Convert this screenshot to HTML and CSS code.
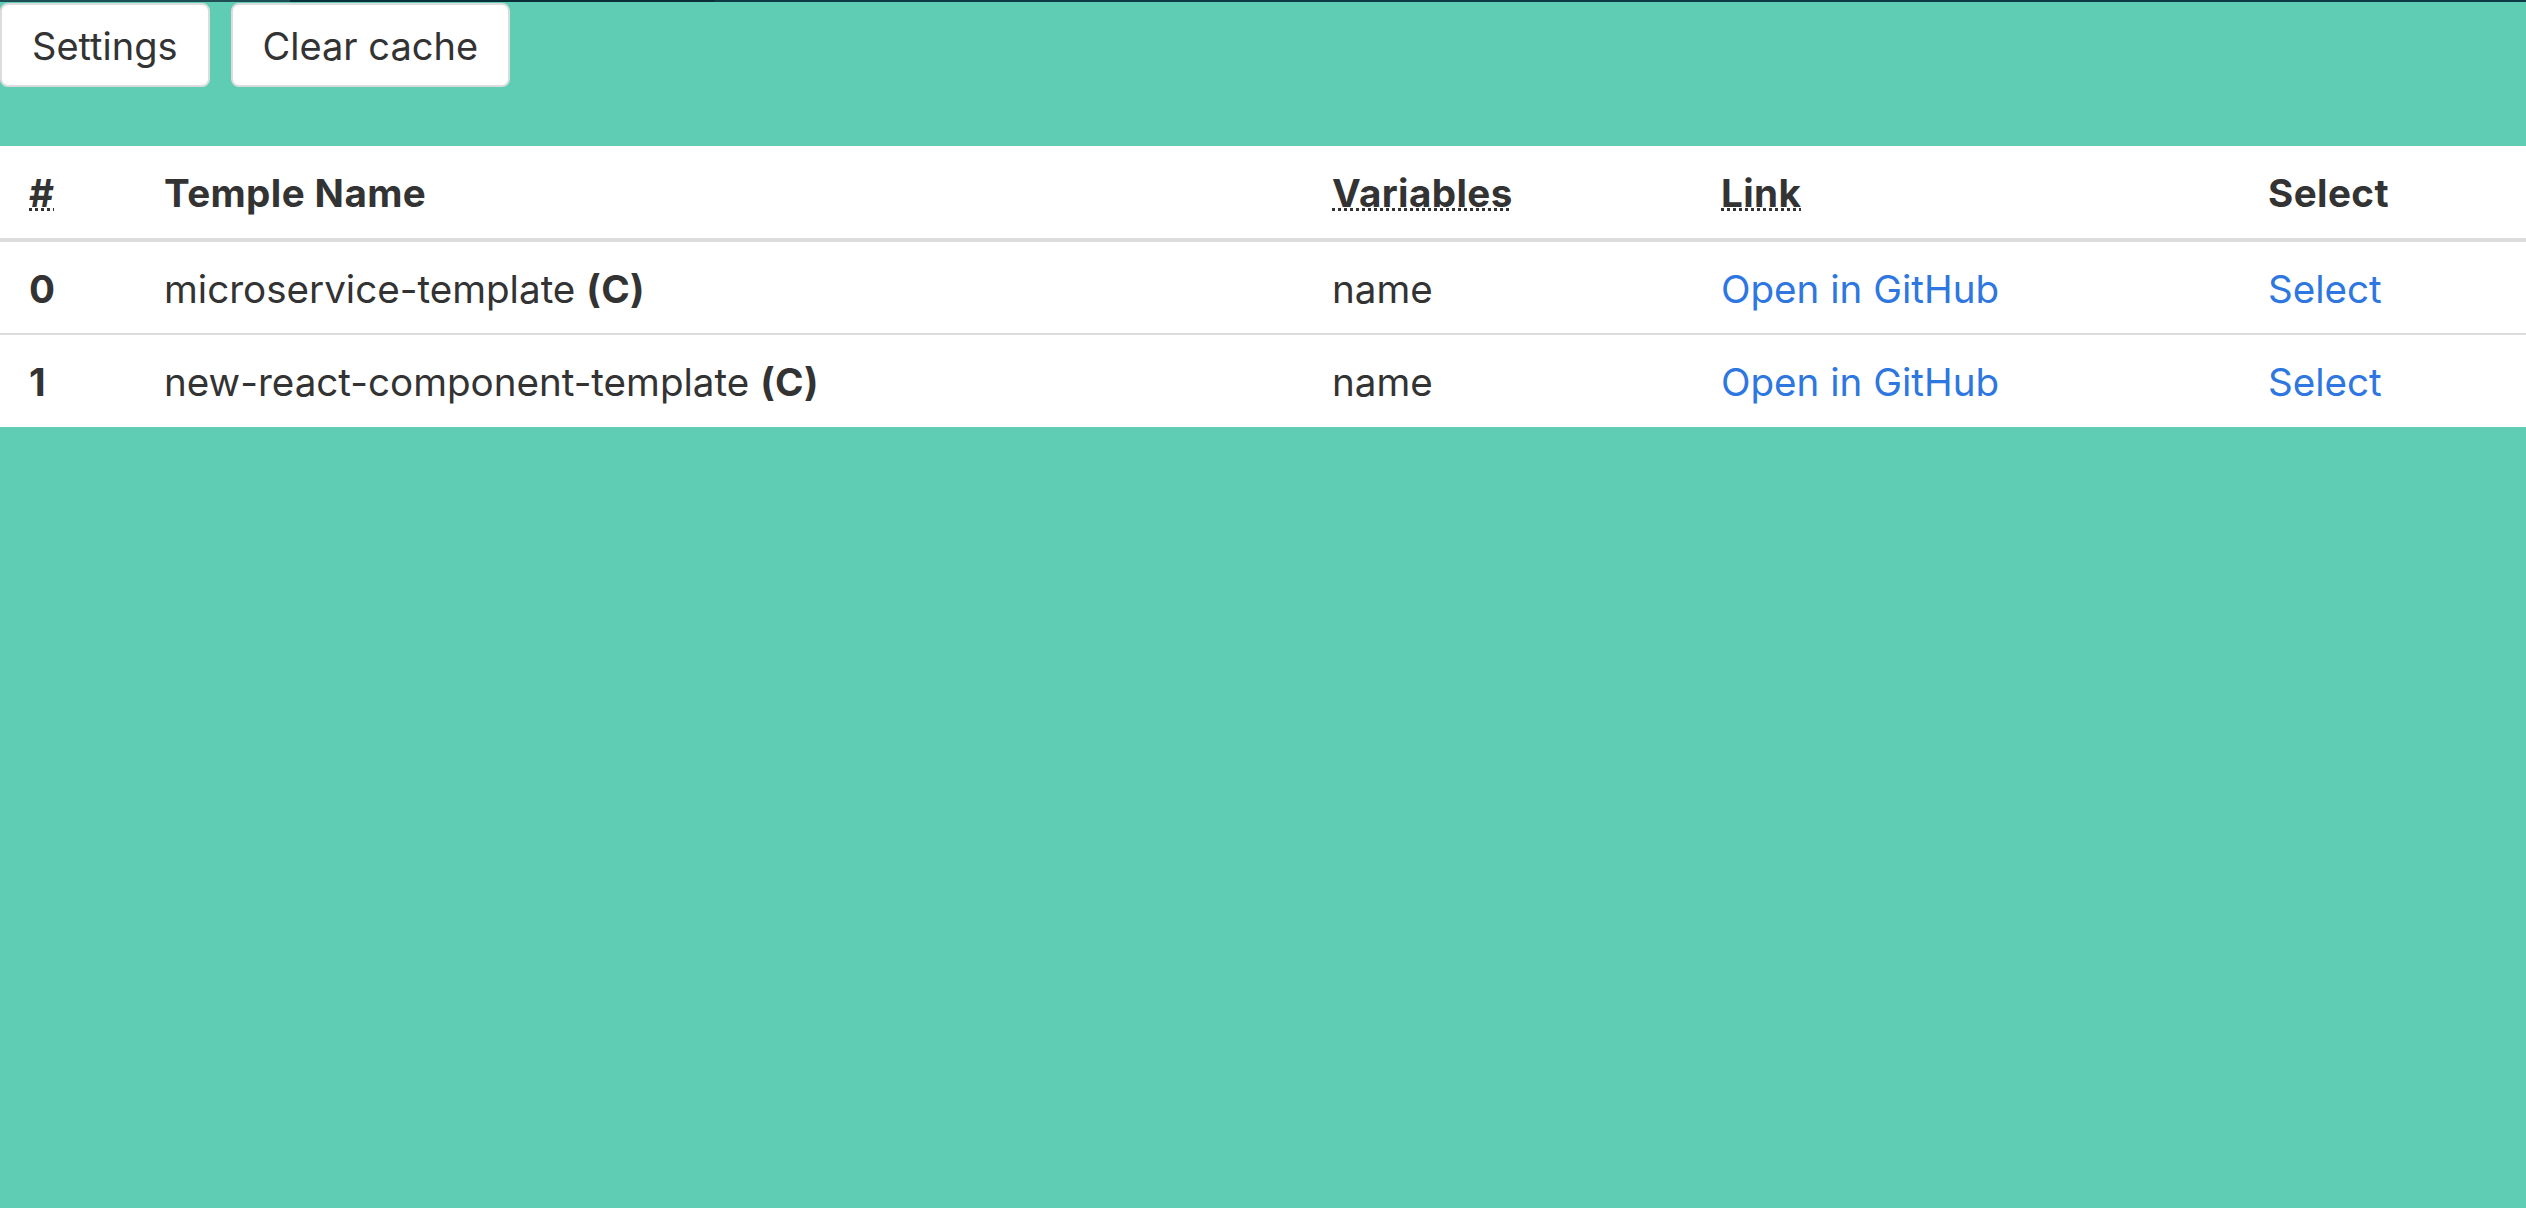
FILE: index.html
```html
<!DOCTYPE html>
<html lang="en">
<head>
<meta charset="utf-8">
<title>Templates</title>
<link rel="stylesheet" href="styles.css">
</head>
<body>
<div class="topline"><span class="seg seg-a"></span><span class="seg seg-b"></span><span class="seg seg-c"></span></div>
<div class="toolbar">
  <button class="btn">Settings</button>
  <button class="btn">Clear cache</button>
</div>
<table class="table">
  <colgroup>
    <col class="c-num"><col class="c-name"><col class="c-vars"><col class="c-link"><col class="c-sel">
  </colgroup>
  <thead>
    <tr>
      <th><abbr title="Index">#</abbr></th>
      <th>Temple Name</th>
      <th><abbr title="Template variables">Variables</abbr></th>
      <th><abbr title="Repository link">Link</abbr></th>
      <th>Select</th>
    </tr>
  </thead>
  <tbody>
    <tr class="row-first">
      <th>0</th>
      <td>microservice-template <b>(C)</b></td>
      <td>name</td>
      <td><a href="#">Open in GitHub</a></td>
      <td><a href="#">Select</a></td>
    </tr>
    <tr>
      <th>1</th>
      <td>new-react-component-template <b>(C)</b></td>
      <td>name</td>
      <td><a href="#">Open in GitHub</a></td>
      <td><a href="#">Select</a></td>
    </tr>
  </tbody>
</table>
</body>
</html>
```

FILE: styles.css
```css
html, body {
  margin: 0;
  padding: 0;
}
body {
  background: #5fcdb4;
  font-family: Inter, "Noto Sans", "Liberation Sans", sans-serif;
  color: #333;
  min-height: 1208px;
}
.topline {
  display: flex;
  height: 2px;
}
.seg { display: block; height: 2px; }
.seg-a { width: 290px; background: #1f4f55; }
.seg-b { width: 425px; background: #0b2f38; }
.seg-c { flex: 1; background: #0d3c47; }

.toolbar {
  display: flex;
  gap: 21px;
  padding: 1px 0 0 0;
  height: 144px;
  box-sizing: border-box;
}
.btn {
  height: 84px;
  box-sizing: border-box;
  background: #fff;
  border: 2px solid #dcdcdc;
  border-radius: 8px;
  padding: 2px 30px 0;
  font-family: inherit;
  font-size: 38px;
  color: #333;
  cursor: pointer;
}

.table {
  width: 100%;
  table-layout: fixed;
  border-collapse: separate;
  border-spacing: 0;
  background: #fff;
  font-size: 38.6px;
}
.c-num { width: 135px; }
.c-name { width: 1168px; }
.c-vars { width: 389px; }
.c-link { width: 547px; }
.c-sel { width: 287px; }

.table th, .table td {
  text-align: left;
  padding: 3px 29px 0;
  white-space: nowrap;
}
.table thead th {
  font-weight: 700;
  letter-spacing: 0.4px;
  line-height: 89px;
  border-bottom: 4px solid #dcdcdc;
}
.table tbody th, .table tbody td {
  line-height: 89px;
}
.table tbody th { font-weight: 700; }
.table tbody .row-first th, .table tbody .row-first td {
  line-height: 88px;
  border-bottom: 2px solid #dcdcdc;
}
.table b { font-weight: 700; letter-spacing: 0.4px; }
abbr {
  text-decoration: underline dotted;
  text-decoration-thickness: 3px;
  text-underline-offset: 1px;
  cursor: help;
}
.table a {
  color: #2e77e0;
  text-decoration: none;
}
```
